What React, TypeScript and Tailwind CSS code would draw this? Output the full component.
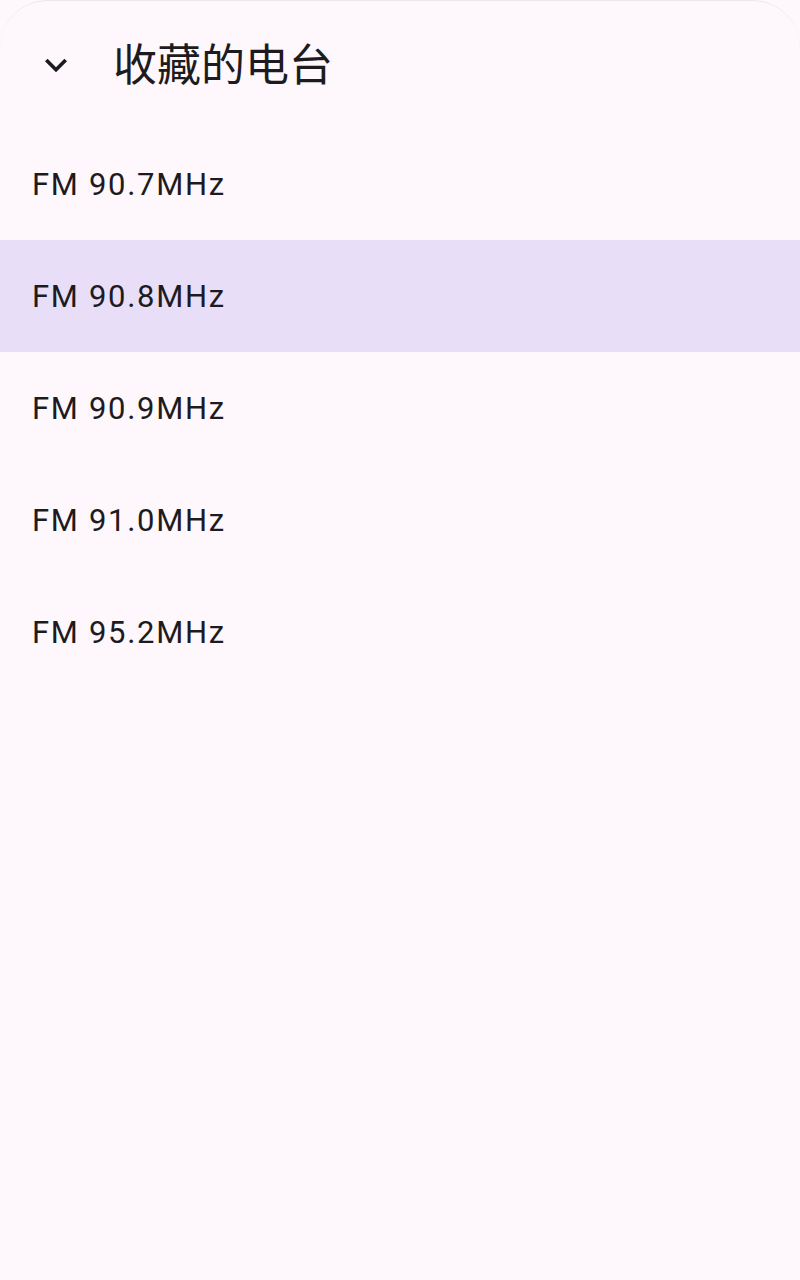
import React, { useState } from 'react';

const stations = ['FM 90.7MHz', 'FM 90.8MHz', 'FM 90.9MHz', 'FM 91.0MHz', 'FM 95.2MHz'];

const App = () => {
  const [selected, setSelected] = useState(1);

  return (
    <div className="w-[800px] h-[1280px] bg-[#fef7fc] overflow-hidden">
      <div className="h-full rounded-t-[48px] border-t border-[#ece6ee] bg-[#fef7fc] font-['Roboto','Noto_Sans_CJK_SC',sans-serif] text-[#1d1b20]">
        <div className="h-[127px] flex items-center">
          <button className="ml-[34px] w-[44px] h-[44px] flex items-center justify-center">
            <svg viewBox="0 0 24 24" width="44" height="44" fill="#1d1b20">
              <path d="M16.59 8.59L12 13.17 7.41 8.59 6 10l6 6 6-6z" />
            </svg>
          </button>
          <h1 className="ml-[35px] mb-[5px] text-[44px] leading-none font-['Noto_Sans_CJK_SC',sans-serif]">收藏的电台</h1>
        </div>
        <ul>
          {stations.map((s, i) => (
            <li
              key={s}
              onClick={() => setSelected(i)}
              className={`h-[112px] flex items-center pl-[32px] text-[31px] leading-none tracking-[1.7px] ${i === selected ? 'bg-[#e8def8]' : ''}`}
            >
              {s}
            </li>
          ))}
        </ul>
      </div>
    </div>
  );
};

export default App;
